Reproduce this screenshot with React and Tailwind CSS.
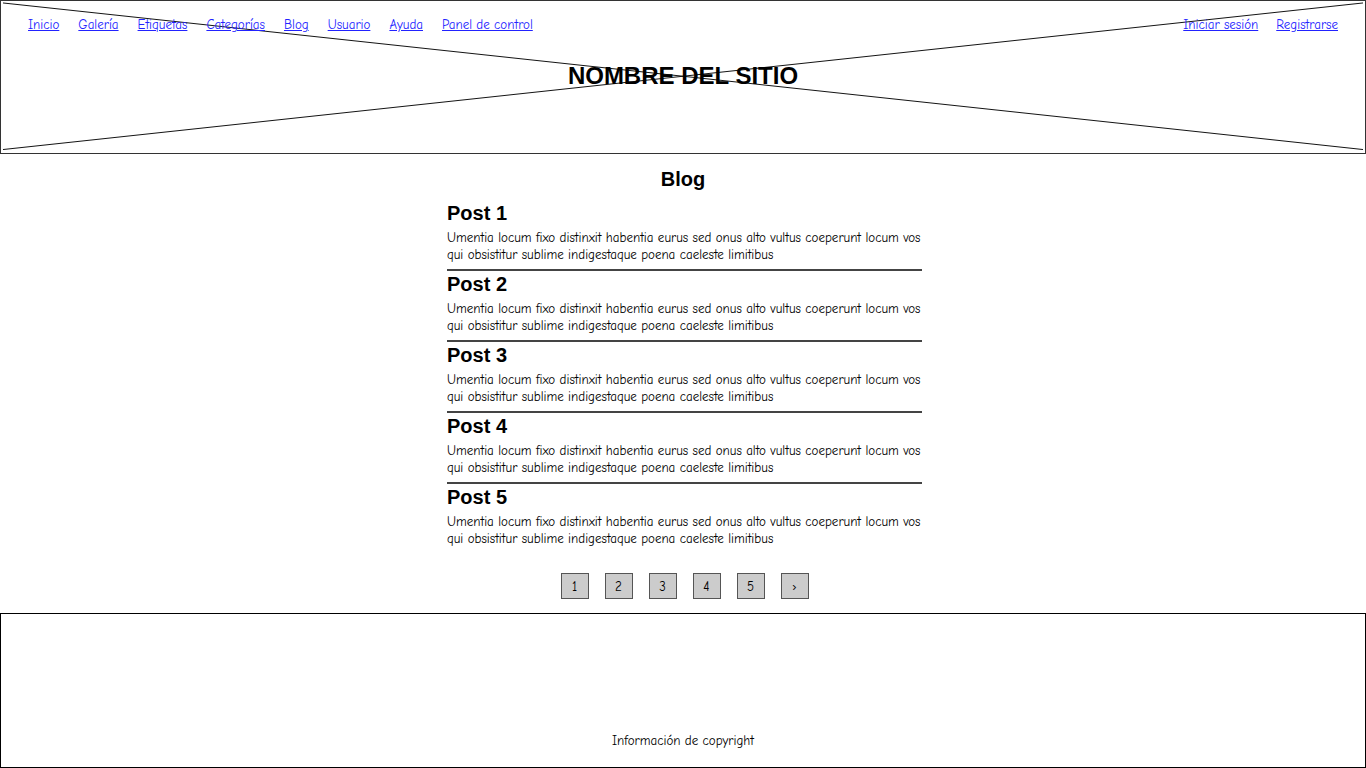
const navLeft = ["Inicio", "Galería", "Etiquetas", "Categorías", "Blog", "Usuario", "Ayuda", "Panel de control"];
const navRight = ["Iniciar sesión", "Registrarse"];
const posts = [1, 2, 3, 4, 5];
const pages = ["1", "2", "3", "4", "5", "›"];

const hand = { fontFamily: '"Comic Sans MS", "Comic Neue", "Liberation Sans", sans-serif' };

function Header() {
  return (
    <header className="relative h-[155px] border border-[#333]">
      <svg className="absolute inset-0 h-full w-full" viewBox="0 0 1366 155" preserveAspectRatio="none">
        <line x1="2" y1="2" x2="1364" y2="151" stroke="#111" strokeWidth="1" />
        <line x1="2" y1="151" x2="1364" y2="2" stroke="#111" strokeWidth="1" />
      </svg>
      <nav className="relative flex items-start justify-between px-[27px] pt-[14px] text-[13px]" style={hand}>
        <div className="flex gap-[19px]">
          {navLeft.map((n) => (
            <a key={n} href="#" className="text-[#2222ff] underline">
              {n}
            </a>
          ))}
        </div>
        <div className="flex gap-[18px]">
          {navRight.map((n) => (
            <a key={n} href="#" className="text-[#2222ff] underline">
              {n}
            </a>
          ))}
        </div>
      </nav>
      <h1 className="relative mt-[23px] text-center font-['Liberation_Sans',Arial,sans-serif] text-[24px] font-bold text-black">
        NOMBRE DEL SITIO
      </h1>
    </header>
  );
}

function Post({ n, last }) {
  return (
    <article className={last ? "" : "border-b-2 border-[#444] pb-[6px]"}>
      <h3 className="font-['Liberation_Sans',Arial,sans-serif] text-[20px] font-bold leading-[24px] text-black">Post {n}</h3>
      <p className="mt-[4px] whitespace-nowrap text-[13px] leading-[17px] text-black" style={hand}>
        Umentia locum fixo distinxit habentia eurus sed onus alto vultus coeperunt locum vos
        <br />
        qui obsistitur sublime indigestaque poena caeleste limitibus
      </p>
    </article>
  );
}

export default function App() {
  return (
    <div className="flex h-[768px] w-[1366px] flex-col bg-white">
      <Header />
      <main className="flex flex-col items-center">
        <h2 className="mt-[13px] font-['Liberation_Sans',Arial,sans-serif] text-[20px] font-bold leading-[24px] text-black">Blog</h2>
        <div className="ml-[3px] mt-[10px] flex w-[475px] flex-col gap-[1px]">
          {posts.map((n) => (
            <Post key={n} n={n} last={n === 5} />
          ))}
        </div>
        <div className="ml-[3px] mt-[26px] flex gap-[16px]">
          {pages.map((p) => (
            <button
              key={p}
              className="flex h-[26px] w-[28px] items-center justify-center border border-[#555] bg-[#cccccc] text-[13px] text-black"
              style={hand}
            >
              {p}
            </button>
          ))}
        </div>
      </main>
      <footer className="mt-[14px] flex h-[155px] items-end justify-center border border-black pb-[17px]">
        <p className="text-[13px] text-black" style={hand}>
          Información de copyright
        </p>
      </footer>
    </div>
  );
}
